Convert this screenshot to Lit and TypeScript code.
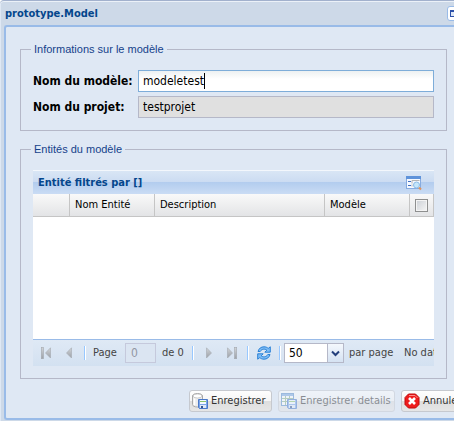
import { LitElement, html, css, svg } from "lit";
import { customElement, state } from "lit/decorators.js";

const pagerIcon = (kind: "first" | "prev" | "next" | "last") => {
  const flipped = kind === "next" || kind === "last";
  const bar = kind === "first" || kind === "last";
  return html`<svg class="glyph" width="16" height="16" viewBox="0 0 16 16" aria-hidden="true">
    <defs>
      <linearGradient id="g-${kind}" x1="0" y1="0" x2="0" y2="1">
        <stop offset="0" stop-color="#d3d6da" />
        <stop offset="1" stop-color="#9a9fa6" />
      </linearGradient>
    </defs>
    <g transform=${flipped ? "matrix(-1 0 0 1 16 0)" : ""} fill="url(#g-${kind})" stroke="#a4a9b0" stroke-width=".6">
      ${bar
        ? svg`<rect x="3.300" y="2.300" width="2.200" height="11.400" /><path d="M12.500 2.800V13L7.500 8Z" />`
        : svg`<path d="M10.500 2.800V13L5.500 8Z" />`}
    </g>
  </svg>`;
};

const floppy = svg`
  <path d="M6.5 6.5H15.5V15.5H7.5L6.5 14.5Z" fill="#7ba6ea" stroke="#4a78c8" />
  <rect x="8" y="7" width="6" height="4" fill="#f4f8ff" />
  <path d="M8 8.5H14" stroke="#8cc46a" />
  <rect x="8" y="12" width="6" height="3" fill="#dfe8f6" />
  <rect x="9" y="13" width="2" height="2" fill="#35548c" />`;

const saveIcon = html`<svg class="glyph" width="16" height="16" viewBox="0 0 16 16" aria-hidden="true">
  <path d="M.5 3C.5 1.600 2.500.5 5.500.5S10.500 1.600 10.500 3V11.500C10.500 13 8.500 14 5.500 14S.5 13 .5 11.500Z" fill="#ececec" stroke="#a8a8a8" />
  <ellipse cx="5.500" cy="3" rx="4.500" ry="2" fill="#fff" stroke="#b5b5b5" stroke-width=".7" />
  <path d="M2.500 5.500V12" stroke="#fff" stroke-width="1.500" />
  ${floppy}
</svg>`;

const detailsIcon = html`<svg class="glyph" width="16" height="16" viewBox="0 0 16 16" aria-hidden="true">
  <rect x=".5" y=".5" width="12" height="12" fill="#fff" stroke="#5b8dc9" />
  <path d="M1 2H12" stroke="#7fa9e0" stroke-width="2" />
  <path d="M1 5.500H12M1 8.500H12M4.500 3V12M8.500 3V12" stroke="#8cb38c" />
  ${floppy}
</svg>`;

const cancelIcon = html`<svg class="glyph" width="16" height="16" viewBox="0 0 16 16" aria-hidden="true">
  <path d="M4.500 1H11.500L15 4.500V11.500L11.500 15H4.500L1 11.500V4.500Z" fill="#ee1c1c" stroke="#c00b0b" stroke-linejoin="round" />
  <path d="M5 2.500H11L13.500 5" fill="none" stroke="#ff8a8a" />
  <path d="M5 5L11 11M11 5L5 11" stroke="#fff" stroke-width="2.600" />
</svg>`;

const searchFormIcon = html`<svg class="glyph" width="16" height="16" viewBox="0 0 16 16" aria-hidden="true">
  <rect x=".5" y="1.500" width="14" height="12" fill="#f5f9ff" stroke="#86abe0" />
  <rect x="0" y="1" width="15" height="3" fill="#5f93da" />
  <path d="M2 6.500H5M2 10.500H5" stroke="#3f6fc4" />
  <path d="M6 8.500V5.500H13.500M6 11.500V9.500" fill="none" stroke="#b4b4b4" />
  <circle cx="10.500" cy="10" r="3" fill="#c4e6fb" stroke="#8cbbe6" />
  <path d="M13 12.500L15 14.500" stroke="#e0935c" stroke-width="2" />
</svg>`;

const refreshIcon = html`<svg class="glyph" width="16" height="16" viewBox="0 0 16 16" aria-hidden="true">
  <g fill="#7dbcf5" stroke="#1d78d2" stroke-width=".9" stroke-linejoin="round">
    <path d="M2 6.500C2.800 3.500 5 1.800 8 1.800C9.800 1.800 11.200 2.400 12.200 3.400L14.300 1.800V7.200H8.800L10.800 5.200C9.200 3.700 5.800 3.600 4.200 6.500Z" />
    <path d="M14 9.500C13.200 12.500 11 14.200 8 14.200C6.200 14.200 4.800 13.600 3.800 12.600L1.700 14.200V8.800H7.200L5.200 10.800C6.800 12.300 10.200 12.400 11.800 9.500Z" />
  </g>
</svg>`;

@customElement("app-root")
export class AppRoot extends LitElement {
  static styles = css`
    :host {
      display: block;
      overflow: hidden;
      font: 12px/16px "DejaVu Sans Condensed", "DejaVu Sans", sans-serif;
      color: #000;
    }
    * { box-sizing: border-box; }
    .window {
      background: #cdd9e8;
      border-top: 1px solid #a2b1cd;
      box-shadow: inset 0 1px #ebf1f8, inset 1px 0 #dfe8f4;
      padding: 0 0 4px 4px;
      border-top-left-radius: 4px;
    }
    .titlebar {
      display: flex;
      align-items: center;
      justify-content: space-between;
      height: 24px;
      padding: 1px 0 0 1px;
      margin-right: -8px;
    }
    h1, h2 { margin: 0; font-size: 11px; line-height: 16px; font-weight: bold; color: #04468c; }
    .tool {
      width: 15px;
      height: 15px;
      padding: 3px 2px;
      border: 1px solid #99bbe8;
      border-radius: 3px;
      background: #fff;
      display: flex;
    }
    .tool i { flex: 1; border: 1px solid #2b50a8; border-top-width: 2px; background: #dfe8f6; }
    .body {
      background: #dfe8f4;
      border: 2px solid #99bbe8;
      border-right: 0;
      border-radius: 3px 0 0 3px;
      padding: 14px 7px 6px 14px;
    }
    fieldset {
      margin: 0 0 10px;
      padding: 13px 12px 12px;
      min-width: 0;
      border: 1px solid #b5b8c8;
    }
    legend {
      margin-left: -2px;
      padding: 0 3px;
      font: 11px/16px "Liberation Sans", Arial, sans-serif;
      color: #15428b;
    }
    .info { display: grid; gap: 4px; }
    .field { display: flex; align-items: center; }
    .field label { width: 105px; flex: none; font-weight: bold; white-space: nowrap; }
    .control { position: relative; flex: 1; display: flex; }
    .text {
      width: 100%;
      height: 22px;
      padding: 0 4px;
      border: 1px solid #b5b8c8;
      border-radius: 0;
      font: inherit;
      color: #000;
      background: #e0e0e0;
      outline: none;
    }
    .text.active {
      border-color: #7eadd9;
      background: linear-gradient(#edf1f2, #fff 8px);
      caret-color: transparent;
    }
    .caret {
      position: absolute;
      left: 5px;
      top: 3px;
      height: 16px;
      border-right: 1px solid #000;
      color: transparent;
      pointer-events: none;
    }
    .entities { margin-bottom: 11px; }
    .gridhead {
      display: flex;
      align-items: center;
      justify-content: space-between;
      height: 24px;
      padding: 0 12px 0 5px;
      border-top: 1px solid #f3f7fc;
      background: linear-gradient(#d9e6f5, #ccdcf2 46%, #b2ccee 48%, #cadcf4);
    }
    button { font: inherit; cursor: pointer; }
    .plain { border: 0; padding: 0; background: none; display: flex; }
    .glyph { display: block; flex: none; }
    .rows { height: 145px; background: #fff; }
    table { width: 100%; table-layout: fixed; border-collapse: separate; border-spacing: 0; }
    th {
      height: 23px;
      padding: 0 5px;
      border-right: 1px solid #c5c5c5;
      border-bottom: 1px solid #c5c5c5;
      background: linear-gradient(#f9f9f9, #e3e4e6);
      font-weight: normal;
      font-size: 11px;
      line-height: 16px;
      text-align: left;
    }
    .c-num { width: 37px; }
    .c-mid { width: 85px; }
    .c-check { width: 24px; }
    .checkbox {
      appearance: none;
      display: block;
      width: 13px;
      height: 13px;
      margin: 0;
      border: 1px solid #8e8f8f;
      outline: 1px solid #f4f4f4;
      outline-offset: -2px;
      background: linear-gradient(135deg, #cbcfd5, #f6f6f6);
    }
    .pager {
      display: flex;
      align-items: center;
      height: 27px;
      overflow: hidden;
      border-top: 1px solid #99bbe8;
      background: linear-gradient(#dfe9f5, #d3e1f1);
      font-size: 11px;
      color: #444;
      white-space: nowrap;
      padding-left: 1px;
    }
    .pager > * { flex: none; }
    .pager .plain { width: 23px; height: 24px; align-items: center; justify-content: center; }
    .sep { width: 2px; height: 14px; border-left: 1px solid #98c8ff; border-right: 1px solid #fff; margin: 0 3px 0 4px; }
    .lbl { width: 36px; padding-left: 4px; }
    .lbl.of { width: 32px; padding-left: 6px; }
    .lbl.per { width: 60px; padding-left: 5px; }
    .num {
      width: 31px;
      height: 20px;
      padding: 0 5px;
      border: 1px solid #c5c9dc;
      border-radius: 0;
      background: #dbe5f2;
      font: inherit;
      font-size: 12px;
      color: #9297a3;
    }
    .combo { position: relative; width: 60px; height: 20px; display: flex; }
    .combo select {
      appearance: none;
      width: 100%;
      padding: 0 4px;
      border: 1px solid #b5b8c8;
      border-radius: 0;
      background: #fff;
      font: inherit;
      font-size: 12px;
      color: #000;
    }
    .trigger {
      position: absolute;
      right: 0;
      top: 0;
      width: 17px;
      height: 20px;
      border: 1px solid #b5b8c8;
      background: linear-gradient(#f4f8fd, #d5e2f2);
      display: grid;
      place-items: center;
      pointer-events: none;
    }
    .actions { display: flex; justify-content: flex-end; gap: 6px; margin-right: -25px; }
    .btn {
      display: flex;
      align-items: center;
      gap: 3px;
      flex: none;
      height: 22px;
      padding: 0 2px;
      border: 1px solid #c6c9cf;
      border-radius: 3px;
      background: linear-gradient(#fefefe, #f6f6f6 48%, #dedede 52%, #e6e6e6);
      font-size: 11px;
      color: #333;
      white-space: nowrap;
    }
    .btn:disabled { opacity: .5; }
    .save { width: 83px; }
    .details { width: 117px; }
    .cancel { width: 71px; }
  `;

  @state() private modelName = "modeletest";

  render() {
    return html`
      <main class="window">
        <header class="titlebar">
          <h1>prototype.Model</h1>
          <button class="tool" aria-label="Agrandir"><i></i></button>
        </header>
        <div class="body">
          <fieldset>
            <legend>Informations sur le modèle</legend>
            <div class="info">
              <div class="field">
                <label for="model">Nom du modèle:</label>
                <div class="control">
                  <input class="text active" id="model" .value=${this.modelName}
                    @input=${(e: Event) => (this.modelName = (e.target as HTMLInputElement).value)} />
                  <span class="caret" aria-hidden="true">${this.modelName}</span>
                </div>
              </div>
              <div class="field">
                <label for="project">Nom du projet:</label>
                <div class="control"><input class="text" id="project" readonly value="testprojet" /></div>
              </div>
            </div>
          </fieldset>
          <fieldset class="entities">
            <legend>Entités du modèle</legend>
            <div class="gridhead">
              <h2>Entité filtrés par []</h2>
              <button class="plain" aria-label="Filtrer">${searchFormIcon}</button>
            </div>
            <div class="rows">
              <table>
                <thead>
                  <tr>
                    <th class="c-num"></th>
                    <th class="c-mid">Nom Entité</th>
                    <th>Description</th>
                    <th class="c-mid">Modèle</th>
                    <th class="c-check"><input class="checkbox" type="checkbox" aria-label="Tout sélectionner" /></th>
                  </tr>
                </thead>
              </table>
            </div>
            <div class="pager">
              <button class="plain" aria-label="Première page">${pagerIcon("first")}</button>
              <button class="plain" aria-label="Page précédente">${pagerIcon("prev")}</button>
              <span class="sep"></span>
              <label class="lbl" for="page">Page</label>
              <input class="num" id="page" value="0" disabled />
              <span class="lbl of">de 0</span>
              <span class="sep"></span>
              <button class="plain" aria-label="Page suivante">${pagerIcon("next")}</button>
              <button class="plain" aria-label="Dernière page">${pagerIcon("last")}</button>
              <span class="sep"></span>
              <button class="plain" aria-label="Actualiser">${refreshIcon}</button>
              <span class="sep"></span>
              <span class="combo">
                <select id="size"><option>50</option><option>100</option></select>
                <span class="trigger"><svg width="9" height="7" viewBox="0 0 9 7"><path d="M1 1.500L4.500 5L8 1.500" fill="none" stroke="#24407c" stroke-width="2" /></svg></span>
              </span>
              <label class="lbl per" for="size">par page</label>
              <span>No data</span>
            </div>
          </fieldset>
          <div class="actions">
            <button class="btn save">${saveIcon}Enregistrer</button>
            <button class="btn details" disabled>${detailsIcon}Enregistrer details</button>
            <button class="btn cancel">${cancelIcon}Annuler</button>
          </div>
        </div>
      </main>
    `;
  }
}
